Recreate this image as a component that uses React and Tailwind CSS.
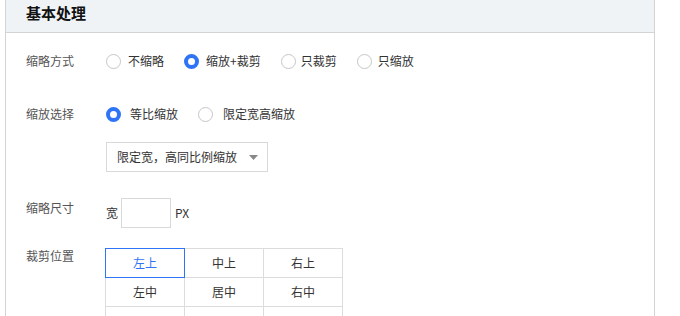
import React from "react";

const font = { fontFamily: '"Noto Sans CJK SC", "Noto Sans", sans-serif' };

function Radio({ checked, label, gap = "gap-[7px]" }) {
  return (
    <label className={`flex items-center ${gap} mr-[20px] cursor-pointer`}>
      {checked ? (
        <span className="block w-[15px] h-[15px] rounded-full border-[4px] border-[#2f74f6] bg-white" />
      ) : (
        <span className="block w-[15px] h-[15px] rounded-full border border-[#c6c6c6] bg-white" />
      )}
      <span className="text-[12px] leading-[20px] text-[#333]">{label}</span>
    </label>
  );
}

function Label({ children, className = "" }) {
  return (
    <div className={`w-[80px] shrink-0 text-[12px] leading-[20px] text-[#555] ${className}`}>
      {children}
    </div>
  );
}

const cells = ["左上", "中上", "右上", "左中", "居中", "右中", "", "", ""];

export default function App() {
  return (
    <div className="w-[680px] h-[316px] overflow-hidden bg-white" style={font}>
      <div className="ml-[5px] w-[650px] min-h-[340px] border-l border-r border-[#d4d4d4]">
        <div className="h-[33px] bg-[#f0f3f6] border-b border-[#d4d4d4] pl-[20px] pt-[3px]">
          <div className="text-[15px] leading-[20px] font-bold text-[#111]">基本处理</div>
        </div>

        <div className="pl-[20px]">
          <div className="flex items-center mt-[18px]">
            <Label>缩略方式</Label>
            <div className="flex items-center">
              <Radio label="不缩略" />
              <Radio checked label="缩放+裁剪" />
              <Radio label="只裁剪" gap="gap-[5px]" />
              <Radio label="只缩放" gap="gap-[6px]" />
            </div>
          </div>

          <div className="flex items-center mt-[33px]">
            <Label>缩放选择</Label>
            <div className="flex items-center">
              <Radio checked label="等比缩放" gap="gap-[9px]" />
              <Radio label="限定宽高缩放" gap="gap-[10px]" />
            </div>
          </div>

          <div className="flex mt-[18px]">
            <div className="w-[80px] shrink-0" />
            <div className="w-[162px] h-[30px] border border-[#d9d9d9] flex items-center justify-between pl-[10px] pr-[9px]">
              <span className="text-[12px] text-[#333]">限定宽，高同比例缩放</span>
              <svg width="9" height="5" viewBox="0 0 9 5">
                <path d="M0 0 L9 0 L4.5 5 Z" fill="#888" />
              </svg>
            </div>
          </div>

          <div className="flex items-start mt-[26px]">
            <Label>缩略尺寸</Label>
            <div className="flex items-center">
              <span className="text-[12px] text-[#333] mr-[3px]">宽</span>
              <div className="w-[50px] h-[30px] border border-[#d9d9d9]" />
              <span className="text-[12px] text-[#333] ml-[4px]">PX</span>
            </div>
          </div>

          <div className="flex items-start mt-[20px]">
            <Label className="-mt-[2px]">裁剪位置</Label>
            <div className="grid grid-cols-3 w-[237px] -ml-px">
              {cells.map((c, i) => (
                <div
                  key={i}
                  className={`relative h-[30px] -mr-px -mb-px flex items-center justify-center text-[12px] border ${
                    i === 0 ? "z-10 border-[#2f74f6] text-[#2f74f6]" : "border-[#dcdcdc] text-[#333]"
                  }`}
                >
                  {c}
                </div>
              ))}
            </div>
          </div>
        </div>
      </div>
    </div>
  );
}
